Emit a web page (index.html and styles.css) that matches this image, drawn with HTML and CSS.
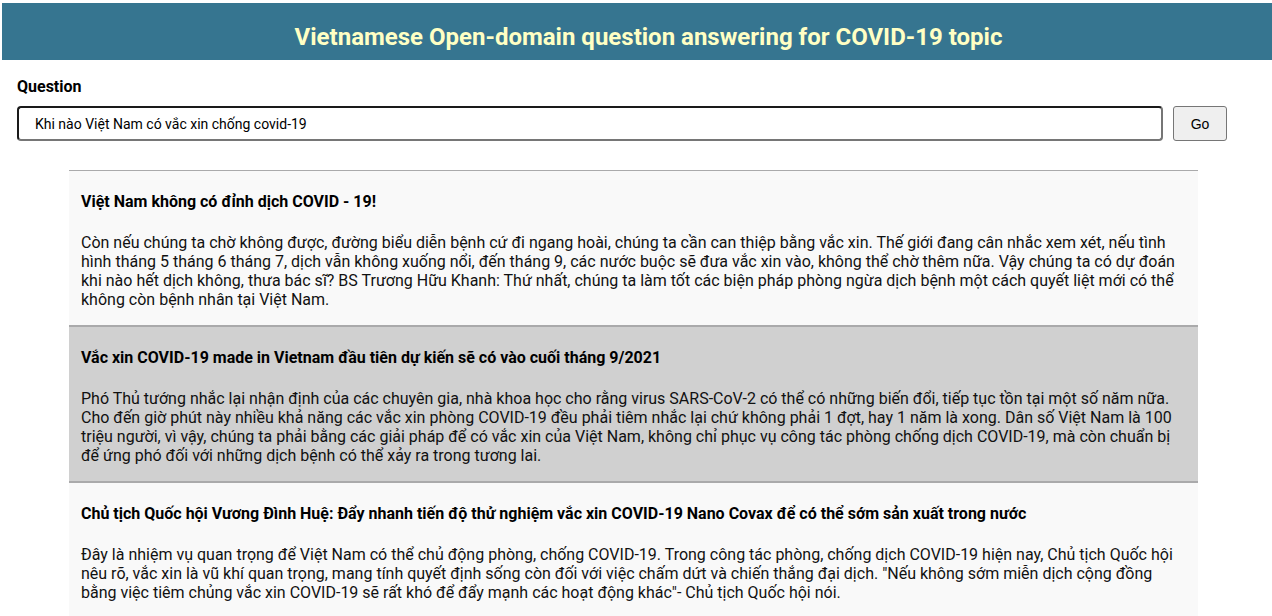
FILE: index.html
```html
<!DOCTYPE html>
<html lang="vi">
<head>
<meta charset="utf-8">
<title>Vietnamese Open-domain QA</title>
<link rel="stylesheet" href="styles.css">
</head>
<body>
<header class="topbar">
  <h1 class="topbar-title">Vietnamese Open-domain question answering for COVID-19 topic</h1>
</header>
<main class="page">
  <form class="ask">
    <label class="ask-label" for="q">Question</label>
    <div class="ask-row">
      <input id="q" class="ask-input" type="text" value="Khi nào Việt Nam có vắc xin chống covid-19">
      <button type="button" class="ask-btn">Go</button>
    </div>
  </form>
  <section class="results">
    <article class="result">
      <h4 class="result-title">Việt Nam không có đỉnh dịch COVID - 19!</h4>
      <p class="result-text">Còn nếu chúng ta chờ không được, đường biểu diễn bệnh cứ đi ngang hoài, chúng ta cần can thiệp bằng vắc xin. Thế giới đang cân nhắc xem xét, nếu tình hình tháng 5 tháng 6 tháng 7, dịch vẫn không xuống nổi, đến tháng 9, các nước buộc sẽ đưa vắc xin vào, không thể chờ thêm nữa. Vậy chúng ta có dự đoán khi nào hết dịch không, thưa bác sĩ? BS Trương Hữu Khanh: Thứ nhất, chúng ta làm tốt các biện pháp phòng ngừa dịch bệnh một cách quyết liệt mới có thể không còn bệnh nhân tại Việt Nam.</p>
    </article>
    <article class="result result-alt">
      <h4 class="result-title">Vắc xin COVID-19 made in Vietnam đầu tiên dự kiến sẽ có vào cuối tháng 9/2021</h4>
      <p class="result-text">Phó Thủ tướng nhắc lại nhận định của các chuyên gia, nhà khoa học cho rằng virus SARS-CoV-2 có thể có những biến đổi, tiếp tục tồn tại một số năm nữa. Cho đến giờ phút này nhiều khả năng các vắc xin phòng COVID-19 đều phải tiêm nhắc lại chứ không phải 1 đợt, hay 1 năm là xong. Dân số Việt Nam là 100 triệu người, vì vậy, chúng ta phải bằng các giải pháp để có vắc xin của Việt Nam, không chỉ phục vụ công tác phòng chống dịch COVID-19, mà còn chuẩn bị để ứng phó đối với những dịch bệnh có thể xảy ra trong tương lai.</p>
    </article>
    <article class="result">
      <h4 class="result-title">Chủ tịch Quốc hội Vương Đình Huệ: Đẩy nhanh tiến độ thử nghiệm vắc xin COVID-19 Nano Covax để có thể sớm sản xuất trong nước</h4>
      <p class="result-text">Đây là nhiệm vụ quan trọng để Việt Nam có thể chủ động phòng, chống COVID-19. Trong công tác phòng, chống dịch COVID-19 hiện nay, Chủ tịch Quốc hội nêu rõ, vắc xin là vũ khí quan trọng, mang tính quyết định sống còn đối với việc chấm dứt và chiến thắng đại dịch. "Nếu không sớm miễn dịch cộng đồng bằng việc tiêm chủng vắc xin COVID-19 sẽ rất khó để đẩy mạnh các hoạt động khác"- Chủ tịch Quốc hội nói.</p>
    </article>
  </section>
</main>
</body>
</html>
```

FILE: styles.css
```css
html, body {
  margin: 0;
  padding: 0;
  background: #ffffff;
}
body {
  font-family: Roboto, "Liberation Sans", sans-serif;
  color: #111111;
}
.topbar {
  margin: 3px 0 0 2px;
  height: 57px;
  background: #367590;
  display: flex;
  align-items: center;
  justify-content: center;
}
.topbar-title {
  margin: 10px 0 0 0;
  padding-left: 23px;
  font-size: 24px;
  font-weight: 700;
  color: #ffffc4;
  line-height: 28px;
}
.page {
  padding: 0 0 0 17px;
}
.ask {
  display: flex;
  flex-direction: column;
  padding-top: 17px;
}
.ask-label {
  font-size: 16px;
  font-weight: 700;
  line-height: 19px;
  color: #000;
}
.ask-row {
  display: flex;
  gap: 10px;
  margin-top: 10px;
}
.ask-input {
  box-sizing: border-box;
  width: 1146px;
  height: 35px;
  padding: 0 16px;
  border: 2px solid #1a1a1a;
  border-bottom-color: #767676;
  border-right-color: #767676;
  border-radius: 4px;
  font-family: Roboto, sans-serif;
  font-size: 14px;
  color: #000;
  background: #fff;
}
.ask-btn {
  box-sizing: border-box;
  width: 54px;
  height: 35px;
  border: 1px solid #767676;
  border-radius: 3px;
  background: #efefef;
  font-family: "Liberation Sans", Arial, sans-serif;
  font-size: 14px;
  color: #000;
}
.results {
  margin: 29px 0 0 52px;
  width: 1129px;
}
.result {
  background: #f9f9f9;
  border-top: 1px solid #aaaaab;
  border-bottom: 1px solid #aaaaab;
  padding: 22px 12px 16px 12px;
}
.result-alt {
  background: #d0d0d0;
}
.result-title {
  margin: 0;
  font-size: 16px;
  font-weight: 700;
  line-height: 18px;
  color: #000;
}
.result-text {
  margin: 22px 0 0 0;
  font-size: 16px;
  line-height: 19px;
  color: #111;
}
```
